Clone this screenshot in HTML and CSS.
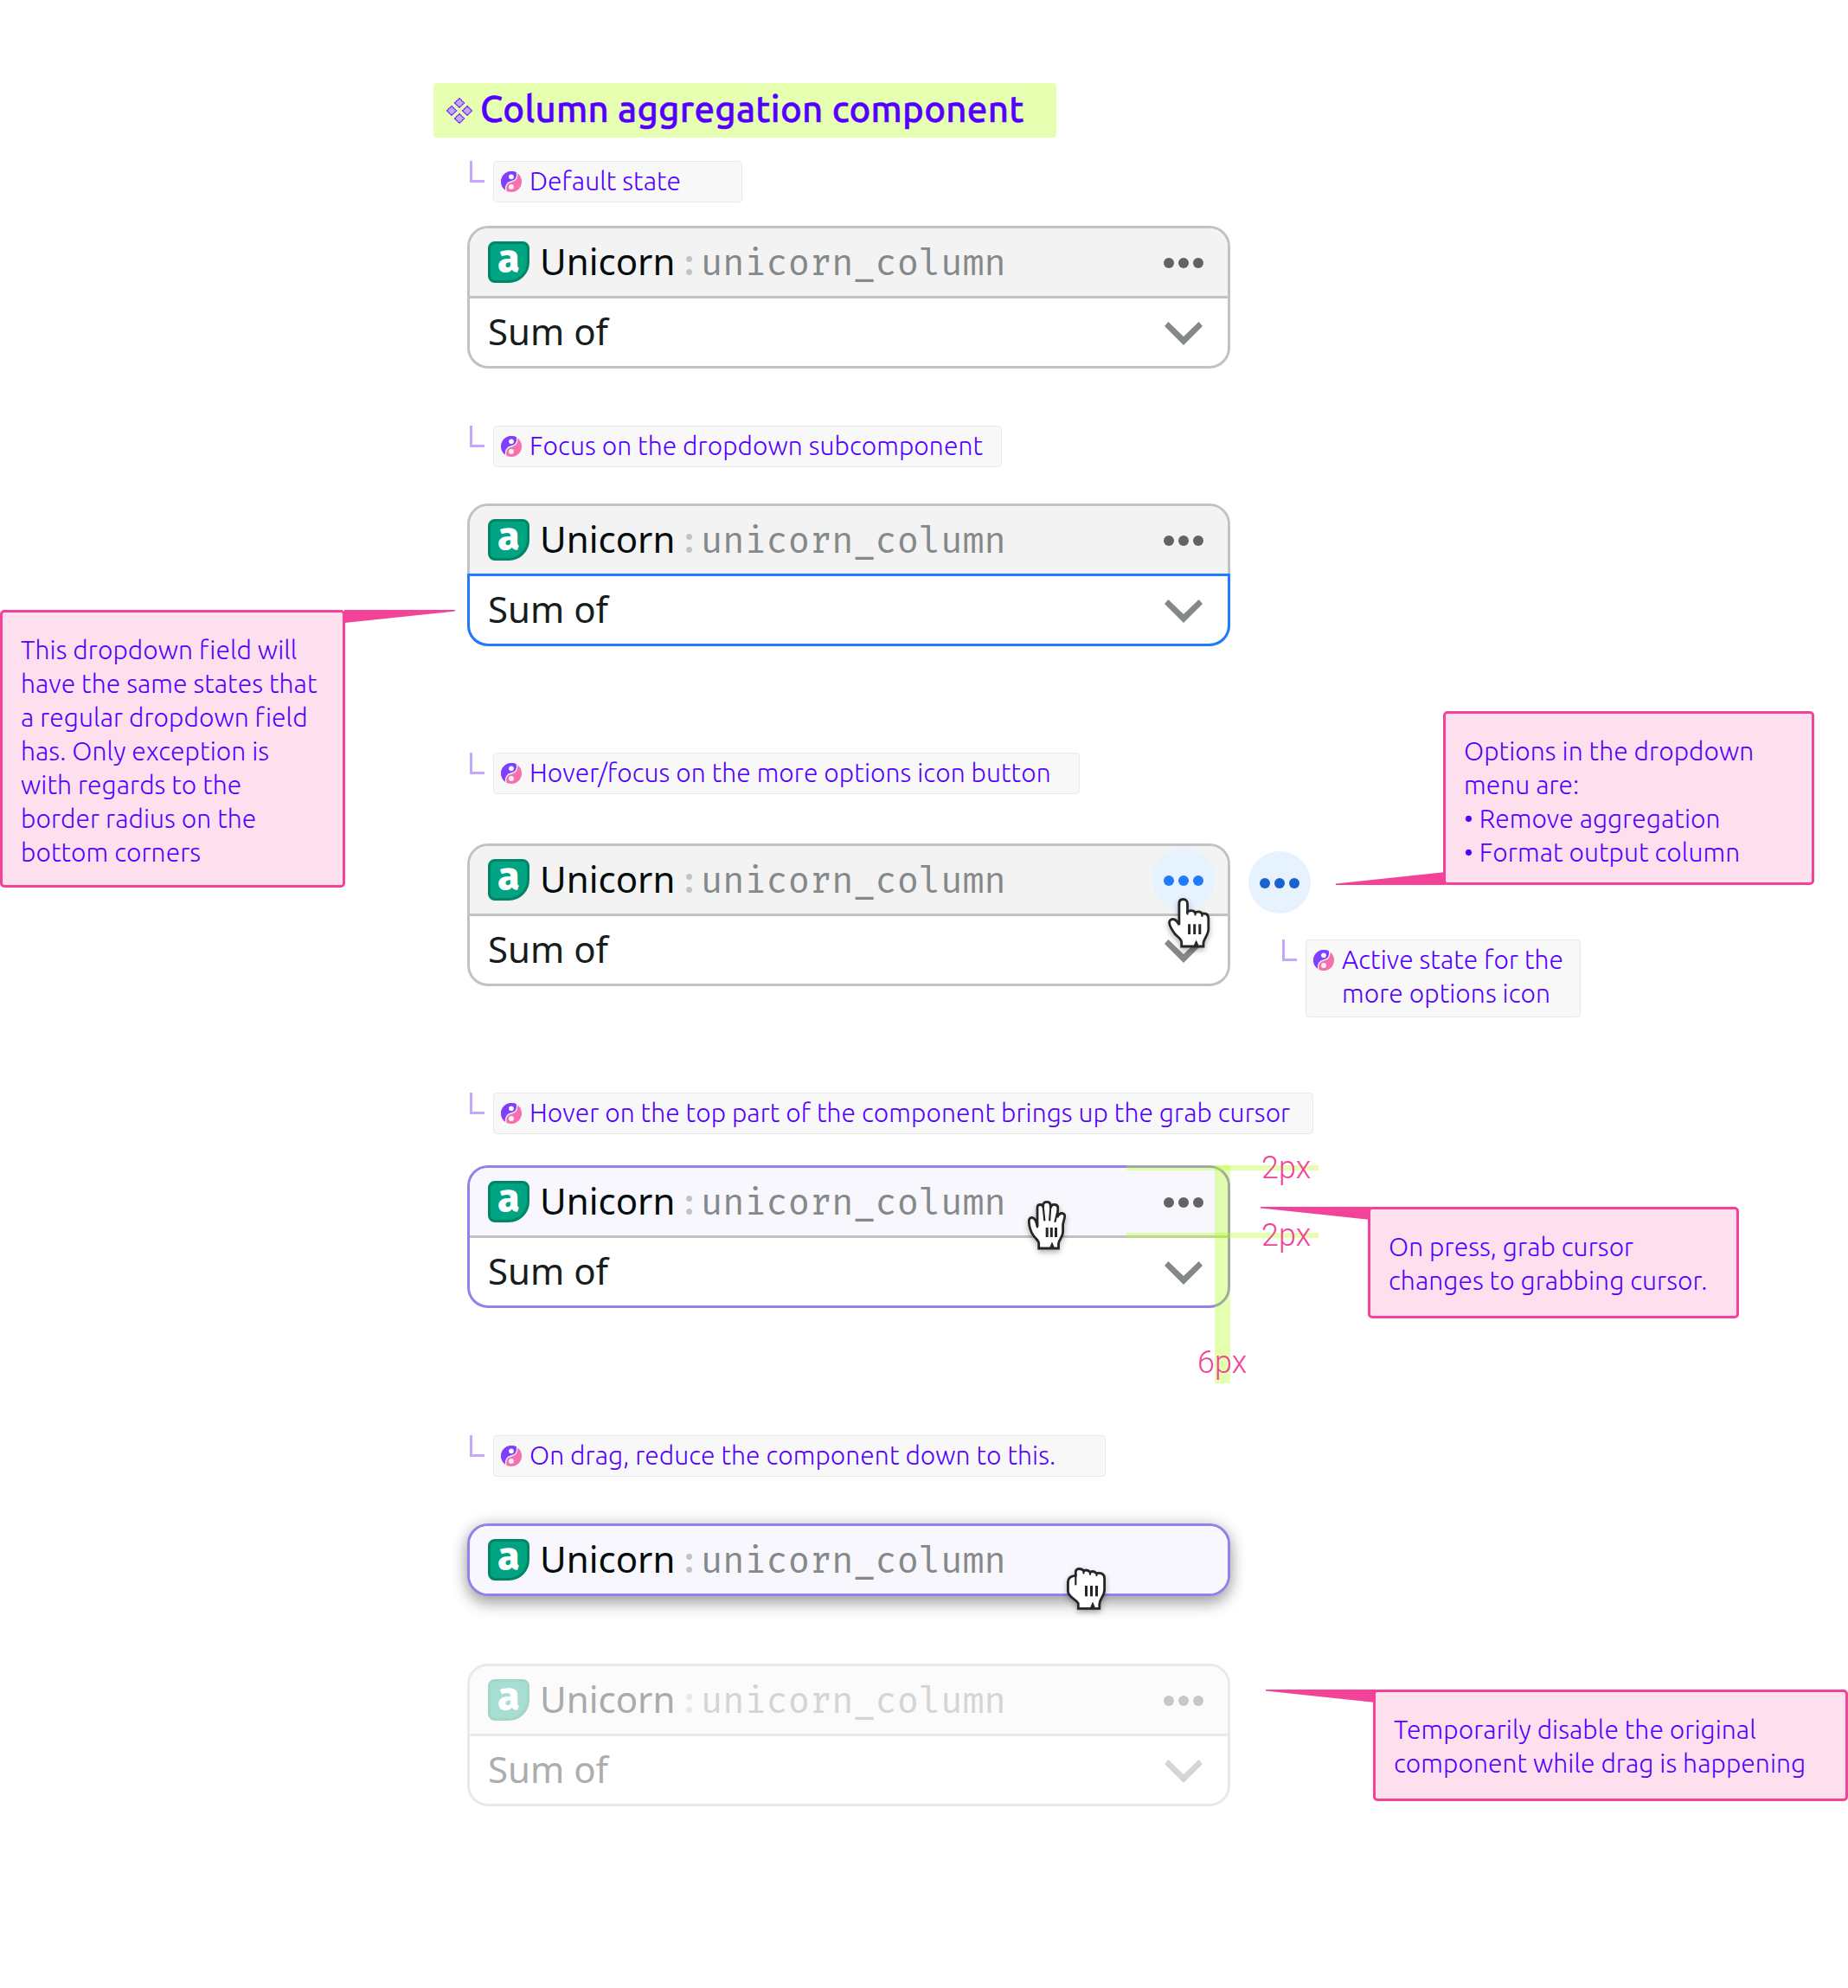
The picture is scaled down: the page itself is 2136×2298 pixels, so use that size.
FILE: index.html
```
<!DOCTYPE html>
<html lang="en">
<head>
<meta charset="utf-8">
<title>Column aggregation component</title>
<link rel="stylesheet" href="styles.css">
</head>
<body>
<svg class="defs" width="0" height="0" aria-hidden="true">
  <defs>
    <symbol id="variant" viewBox="0 0 24 24">
      <circle cx="12" cy="12" r="12" fill="#f66fae"/>
      <path d="M18.500 1.700A12 12 0 1 0 5.800 22.200C4.600 17 7 12.900 12 12C17 11.200 19.600 7.200 18.500 1.700Z" fill="#7d40ff"/>
      <path d="M18.500 1.200C19.600 7.200 17 11.200 12 12C7 12.900 4.600 17 5.800 22.600" fill="none" stroke="#f8f8f8" stroke-width="1.300"/>
      <circle cx="12" cy="6.300" r="2.900" fill="#f8f8f8"/>
      <circle cx="12" cy="17.900" r="2.900" fill="#f8f8f8"/>
    </symbol>
    <symbol id="dots" viewBox="0 0 46 12">
      <circle cx="6" cy="6" r="6"/><circle cx="23" cy="6" r="6"/><circle cx="40" cy="6" r="6"/>
    </symbol>
    <symbol id="chevron" viewBox="0 0 44 27">
      <path d="M0 5L4.400 0L22 17L39.600 0L44 5L22 27Z"/>
    </symbol>
  </defs>
</svg>

<main class="board">
  <header class="title">
    <svg class="title-icon" width="30" height="30" viewBox="0 0 30 30">
      <g fill="#c4a6ff" stroke="#5500ff" stroke-width="1.200" stroke-dasharray="1.800 .5">
        <path d="M15 .7L20.600 6L15 11.300L9.400 6Z"/>
        <path d="M6 9.700L11.600 15L6 20.300L.4 15Z"/>
        <path d="M24 9.700L29.600 15L24 20.300L18.400 15Z"/>
        <path d="M15 18.700L20.600 24L15 29.300L9.400 24Z"/>
      </g>
    </svg>
    <h1>Column aggregation component</h1>
  </header>

  <section class="row row-default">
    <div class="state">
      <div class="label"><i class="elbow"></i><div class="tag w-default"><svg><use href="#variant"/></svg><span>Default state</span></div></div>
      <article class="card">
        <div class="head"><span class="chip">a</span><span class="name">Unicorn</span><span class="colon">:</span><span class="col">unicorn_column</span><svg class="dots"><use href="#dots"/></svg></div>
        <div class="field"><span>Sum of</span><svg class="chevron"><use href="#chevron"/></svg></div>
      </article>
    </div>
  </section>

  <section class="row row-focus">
    <aside class="note note-field">
      <svg class="tail" width="128" height="15" viewBox="0 0 128 15"><path d="M0 0H128V1.500L0 15Z"/></svg>
      This dropdown field will<br>have the same states that<br>a regular dropdown field<br>has. Only exception is<br>with regards to the<br>border radius on the<br>bottom corners
    </aside>
    <div class="state">
      <div class="label"><i class="elbow"></i><div class="tag w-focus"><svg><use href="#variant"/></svg><span>Focus on the dropdown subcomponent</span></div></div>
      <article class="card focused">
        <div class="head"><span class="chip">a</span><span class="name">Unicorn</span><span class="colon">:</span><span class="col">unicorn_column</span><svg class="dots"><use href="#dots"/></svg></div>
        <div class="field"><span>Sum of</span><svg class="chevron"><use href="#chevron"/></svg></div>
      </article>
    </div>
  </section>

  <section class="row row-hover">
    <div class="state">
      <div class="label"><i class="elbow"></i><div class="tag w-hover"><svg><use href="#variant"/></svg><span>Hover/focus on the more options icon button</span></div></div>
      <article class="card hovered">
        <div class="head"><span class="chip">a</span><span class="name">Unicorn</span><span class="colon">:</span><span class="col">unicorn_column</span><span class="more"><svg class="dots"><use href="#dots"/></svg></span></div>
        <div class="field"><span>Sum of</span><svg class="chevron"><use href="#chevron"/></svg></div>
        <svg class="cursor pointer" width="49" height="59" viewBox="0 0 49 59">
          <path d="M17.500 1.500C14.500 1.500 12.900 3.500 12.900 6.500V31C11 27.500 8.500 24.500 5.700 24.500C3 24.500 1 26.500 1.600 29.500C2.500 34 5 37.500 8 41.500C11 45 15.700 47 15.700 51.500V56H41V51.500C42 46.500 46.800 42 46.800 36V24C46.800 20 45 18 41.500 18C40.800 18 40 18.200 39.500 18.600C38.500 16.500 36.500 15.800 34.500 16C33 16.100 32 16.600 31.500 17C30.500 15 28 14.400 25.500 14.700L22.500 16V6.500C22.500 3.500 20.500 1.500 17.500 1.500Z"/>
          <path class="detail" d="M31.500 17V19.500M39.500 18.600V21M22.500 15V18.500"/>
          <path class="bars" d="M24.600 30.300V42M30.700 30.300V42M36.800 30.300V42"/>
          <path class="notch" d="M29.800 56L32.600 49.500L35.600 56Z"/>
        </svg>
      </article>
    </div>
    <div class="active-state">
      <span class="more pressed"><svg class="dots"><use href="#dots"/></svg></span>
      <div class="label"><i class="elbow"></i><div class="tag w-active"><svg><use href="#variant"/></svg><span>Active state for the<br>more options icon</span></div></div>
    </div>
    <aside class="note note-menu">
      <svg class="tail" width="127" height="15" viewBox="0 0 127 15"><path d="M127 15H0V13.500L127 0Z"/></svg>
      Options in the dropdown<br>menu are:<br>• Remove aggregation<br>• Format output column
    </aside>
  </section>

  <section class="row row-grab">
    <div class="state">
      <div class="label"><i class="elbow"></i><div class="tag w-grab"><svg><use href="#variant"/></svg><span>Hover on the top part of the component brings up the grab cursor</span></div></div>
      <article class="card grab">
        <div class="head"><span class="chip">a</span><span class="name">Unicorn</span><span class="colon">:</span><span class="col">unicorn_column</span><svg class="dots"><use href="#dots"/></svg></div>
        <div class="field"><span>Sum of</span><svg class="chevron"><use href="#chevron"/></svg></div>
        <svg class="cursor open-hand" width="45" height="57" viewBox="0 0 45 57">
          <path d="M11 30V8.500C11 5.500 12.500 4.500 14.500 4.500C16.300 4.500 17.400 5.500 17.700 7.500V5.500C17.700 2.500 19.500 1.300 22 1.300C24.500 1.300 26 2.500 26.300 5.500V8C27 5.500 28.500 4.200 31 4.500C34 4.800 35 6.500 34.800 9L34 19C35.500 16 37 14.300 39.500 14.500C42.300 14.700 43.300 16.500 42.500 19.500L40.600 27V36C40.600 42 35.500 45 35.500 50V55H12.700V49C12.700 46 8.500 43.500 6 39.500C3 35 1.700 30 1.300 24.500C1.100 21 2.500 19.300 5 19.500C8.500 19.800 10 24 11 30Z"/>
          <path class="detail" d="M17.600 6L19.300 22.500M26.300 6L25.200 22.500M34 14L31.500 24M11 24V30.500"/>
          <path class="bars" d="M22.200 31V42M27.300 31V42M32.500 31V42"/>
          <path class="notch" d="M25.300 55L28 48.500L30.700 55Z"/>
        </svg>
        <i class="line line-top"></i>
        <i class="line line-mid"></i>
        <i class="line line-side"></i>
        <b class="measure m-top">2px</b>
        <b class="measure m-mid">2px</b>
        <b class="measure m-side">6px</b>
      </article>
    </div>
    <aside class="note note-press">
      <svg class="tail" width="127" height="15" viewBox="0 0 127 15"><path d="M127 0H0V1.500L127 15Z"/></svg>
      On press, grab cursor<br>changes to grabbing cursor.
    </aside>
  </section>

  <section class="row row-drag">
    <div class="state">
      <div class="label"><i class="elbow"></i><div class="tag w-drag"><svg><use href="#variant"/></svg><span>On drag, reduce the component down to this.</span></div></div>
      <article class="card dragging">
        <div class="head"><span class="chip">a</span><span class="name">Unicorn</span><span class="colon">:</span><span class="col">unicorn_column</span></div>
        <svg class="cursor fist" width="46" height="49" viewBox="0 0 46 49">
          <path d="M10.300 9.300V5C10.300 2.500 12 1.500 14.500 1.500C17 1.500 18.500 2.300 19.500 3.800C22 2.500 25 3 27 5.200C29.500 4 32.500 4.500 34.500 6.700C39.500 5.500 43.600 7.500 43.600 12.500V26C43.600 33 37.800 36 37.800 42V47.300H13.300V41.500C10.500 36 1.400 34.500 1.400 27V17C1.400 12 4.500 9.500 10.300 9.300Z"/>
          <path class="detail" d="M10.300 8V19.500M19.500 3.800V6.500M27 5.200V7.800M34.500 6.700V9"/>
          <path class="bars" d="M22.500 21V33.300M28.500 21V33.300M34.500 21V33.300"/>
          <path class="notch" d="M27.200 47.300L30 40.500L32.800 47.300Z"/>
        </svg>
      </article>
      <article class="card disabled">
        <div class="head"><span class="chip">a</span><span class="name">Unicorn</span><span class="colon">:</span><span class="col">unicorn_column</span><svg class="dots"><use href="#dots"/></svg></div>
        <div class="field"><span>Sum of</span><svg class="chevron"><use href="#chevron"/></svg></div>
      </article>
    </div>
    <aside class="note note-disabled">
      <svg class="tail" width="127" height="15" viewBox="0 0 127 15"><path d="M127 0H0V1.500L127 15Z"/></svg>
      Temporarily disable the original<br>component while drag is happening
    </aside>
  </section>
</main>
</body>
</html>
```
FILE: styles.css
```
:root {
  --ink: #5500ff;
  --pink: #f24399;
  --violet: #9480e8;
  --line: #c0c2c3;
  --blue: #1f7cff;
}

* { box-sizing: border-box; }

body {
  margin: 0;
  background: #fff;
  font-family: "Noto Sans", "Open Sans", sans-serif;
}

.defs { position: absolute; }

.board {
  width: 2136px;
  height: 2298px;
  padding-top: 96px;
  overflow: hidden;
}

/* Title */
.title {
  display: flex;
  align-items: center;
  gap: 9px;
  width: 720px;
  height: 63px;
  margin: 0 0 27px 501px;
  padding-left: 15px;
  border-radius: 4px;
  background: #e6ffb0;
}
.title h1 {
  margin: 0;
  padding-bottom: 3px;
  color: var(--ink);
  font: 500 42px/60px Ubuntu, "Open Sans", sans-serif;
  letter-spacing: .27px;
  -webkit-text-stroke: .5px var(--ink);
  white-space: nowrap;
}

/* Rows */
.row {
  display: grid;
  grid-template-columns: 540px 882px 1fr;
  grid-template-rows: 100%;
  align-items: start;
  justify-items: start;
}
.row-default { height: 306px; }
.row-focus { height: 378px; }
.row-hover { height: 393px; }
.row-grab { height: 396px; }
.state { grid-area: 1 / 2; width: 882px; }

.row-default .card { margin-top: 27px; }
.row-focus .card { margin-top: 42px; }
.row-hover .card { margin-top: 57px; }
.row-grab .card { margin-top: 36px; }
.row-drag .card { margin-top: 54px; }
.row-drag .card.disabled { margin-top: 78px; }

/* Labels */
.label { display: flex; align-items: flex-start; padding-left: 3px; }
.elbow {
  flex: none;
  width: 17px;
  height: 25px;
  margin-right: 10px;
  border-left: 3px solid #c4a6ff;
  border-bottom: 3px solid #c4a6ff;
}
.tag {
  display: flex;
  flex: none;
  gap: 9px;
  padding: 3px 0 4px 8px;
  border: 1px solid #e9e9e9;
  border-radius: 4px;
  background: #f8f8f8;
  color: var(--ink);
  font: 300 30px/39px Ubuntu, "Open Sans", sans-serif;
  letter-spacing: .06px;
  white-space: nowrap;
}
.tag svg { width: 24px; height: 24px; margin-top: 8px; }
.w-default { width: 288px; }
.w-focus { width: 588px; }
.w-hover { width: 678px; }
.w-grab { width: 948px; }
.w-drag { width: 708px; }
.w-active { width: 318px; height: 90px; }

/* Card */
.card {
  position: relative;
  border: 3px solid var(--line);
  border-radius: 24px;
  background: #fff;
}
.head, .field {
  display: flex;
  align-items: center;
  height: 78px;
  padding: 0 28px 0 21px;
  font-size: 42px;
  white-space: nowrap;
}
.head {
  border-radius: 21px 21px 0 0;
  background: #f3f3f3;
  color: #040c0c;
}
.field {
  height: 81px;
  border-top: 3px solid var(--line);
  color: #171d1d;
}
.name, .field span { padding-bottom: 3px; }
.chip {
  width: 48px;
  height: 48px;
  margin-right: 12px;
  border: 3px solid #008567;
  border-radius: 8px 8px 24px 8px;
  background: #00a382;
  color: #fff;
  font: 800 46px/34px "Fira Sans", "Open Sans", sans-serif;
  text-align: center;
}
.name { width: 160px; }
.colon, .col {
  padding-top: 2px;
  font-family: "Fira Mono", "Noto Sans Mono", "Liberation Mono", monospace;
}
.colon { width: 26px; color: #c0c2c3; }
.col { flex: 1; color: #858a89; }
.dots { width: 46px; height: 12px; margin-top: 2px; fill: #5f6567; }
.chevron { width: 44px; height: 27px; margin: 3px 1px 0 auto; fill: #858889; }

.focused .field {
  width: 882px;
  height: 84px;
  margin: 0 -3px -3px;
  border: 3px solid var(--blue);
  border-radius: 0 0 24px 24px;
}

.more {
  display: flex;
  align-items: center;
  justify-content: center;
  width: 72px;
  height: 72px;
  border-radius: 50%;
  background: #e7f2ff;
}
.more .dots { fill: var(--blue); }
.more.pressed .dots { fill: #1863d0; }
.hovered .more { margin: 0 -13px; }

.grab, .dragging { border-color: var(--violet); }
.grab .head { background: #f8f7fd; }
.dragging .head { border-radius: 21px; background: #f8f7fd; }
.dragging { box-shadow: 0 9px 18px rgba(0, 0, 0, .3), 0 0 18px rgba(0, 0, 0, .16); }

.disabled { border-color: #e8eaea; }
.disabled .head { background: #fbfbfb; color: #a9abab; }
.disabled .field { border-color: #e8eaea; color: #abaeae; }
.disabled .chip { border-color: #a5d4c9; background: #a6ded2; }
.disabled .colon { color: #e8e9e9; }
.disabled .col { color: #d3d5d4; }
.disabled .dots { fill: #c6c8c8; }
.disabled .chevron { fill: #d3d5d6; }

/* Cursors lie over the cards */
.cursor {
  position: absolute;
  fill: #fff;
  stroke: #262626;
  stroke-width: 2.8px;
  overflow: visible;
  filter: drop-shadow(0 3px 3px rgba(0, 0, 0, .3));
}
.cursor .detail { fill: none; stroke-width: 2.2px; stroke-linecap: round; }
.cursor .bars { fill: none; stroke-width: 3px; }
.cursor .notch { fill: #262626; stroke-width: 1px; }
.pointer { left: 807px; top: 60px; }
.open-hand { left: 645px; top: 38px; }
.fist { left: 690px; top: 48px; }

/* Spacing redlines over the card */
.line { position: absolute; background: rgba(178, 255, 22, .34); }
.line-top { left: 759px; top: -3px; width: 222px; height: 6px; }
.line-mid { left: 759px; top: 75px; width: 222px; height: 6px; }
.line-side { left: 861px; top: -3px; width: 18px; height: 252px; }
.measure {
  position: absolute;
  color: var(--pink);
  font: 300 36px/42px Roboto, sans-serif;
}
.m-top { left: 915px; top: -21px; }
.m-mid { left: 915px; top: 57px; }
.m-side { left: 841px; top: 204px; }

/* Notes */
.note {
  position: relative;
  padding: 24px 21px 0;
  border: 3px solid var(--pink);
  border-radius: 5px;
  background: #fddfed;
  color: var(--ink);
  font: 300 30px/39px Ubuntu, "Open Sans", sans-serif;
  letter-spacing: .06px;
  white-space: nowrap;
}
.tail { position: absolute; fill: var(--pink); }
.note-field { grid-area: 1 / 1; width: 399px; height: 321px; margin-top: 213px; }
.note-field .tail { left: 395px; top: -3px; }
.note-menu { grid-area: 1 / 3; width: 429px; height: 201px; margin: -48px 0 0 246px; }
.note-menu .tail { right: 423px; bottom: -3px; }
.note-press { grid-area: 1 / 3; width: 429px; height: 129px; margin: 132px 0 0 159px; }
.note-press .tail { right: 423px; top: -3px; }
.note-disabled { grid-area: 1 / 3; width: 549px; height: 129px; margin: 294px 0 0 165px; }
.note-disabled .tail { right: 543px; top: -3px; }

.active-state { grid-area: 1 / 3; padding: 114px 0 0 57px; }
.active-state .more { margin: 0 0 30px -36px; }
```
